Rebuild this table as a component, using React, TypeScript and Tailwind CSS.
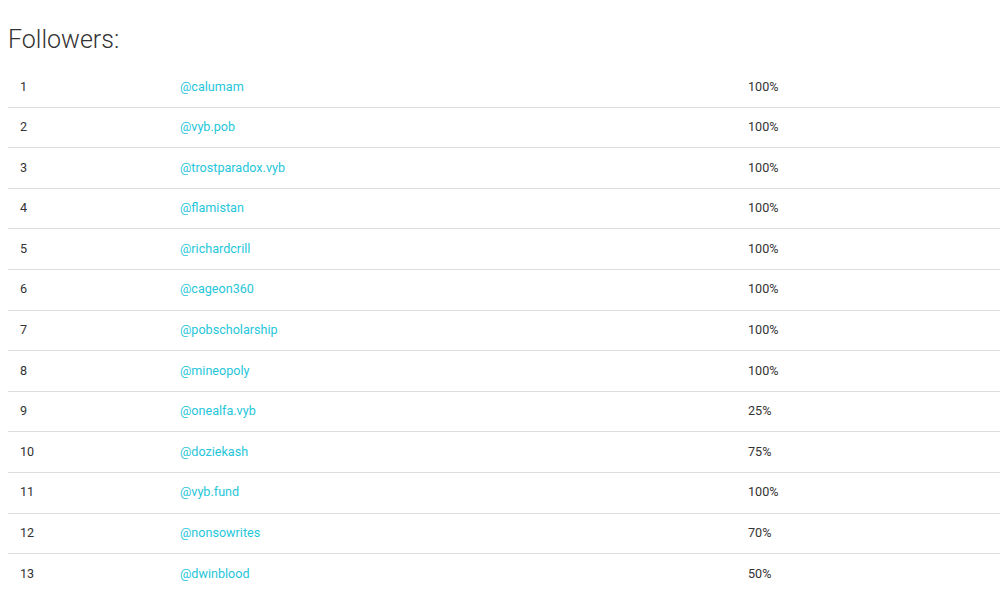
const FOLLOWERS = [
  { handle: "calumam", score: "100%" },
  { handle: "vyb.pob", score: "100%" },
  { handle: "trostparadox.vyb", score: "100%" },
  { handle: "flamistan", score: "100%" },
  { handle: "richardcrill", score: "100%" },
  { handle: "cageon360", score: "100%" },
  { handle: "pobscholarship", score: "100%" },
  { handle: "mineopoly", score: "100%" },
  { handle: "onealfa.vyb", score: "25%" },
  { handle: "doziekash", score: "75%" },
  { handle: "vyb.fund", score: "100%" },
  { handle: "nonsowrites", score: "70%" },
  { handle: "dwinblood", score: "50%" },
];

export default function App() {
  return (
    <div className="min-h-[600px] bg-white pl-2 font-['Roboto',sans-serif] text-[#333]">
      <h3 className="pt-[25px] pb-[12px] text-[25px] font-light leading-[30px]">Followers:</h3>
      <div className="flex flex-col">
        {FOLLOWERS.map((f, i) => (
          <div
            key={f.handle}
            className={`grid grid-cols-[160px_568px_1fr] text-[12.6px] leading-[18.6px] ${
              i < FOLLOWERS.length - 1 ? "border-b border-[#ddd]" : ""
            }`}
          >
            <div className="px-3 py-[10.5px]">{i + 1}</div>
            <div className="px-3 py-[10.5px]">
              <a href="#" className="text-[#26c6da]">@{f.handle}</a>
            </div>
            <div className="px-3 py-[10.5px]">{f.score}</div>
          </div>
        ))}
      </div>
    </div>
  );
}
